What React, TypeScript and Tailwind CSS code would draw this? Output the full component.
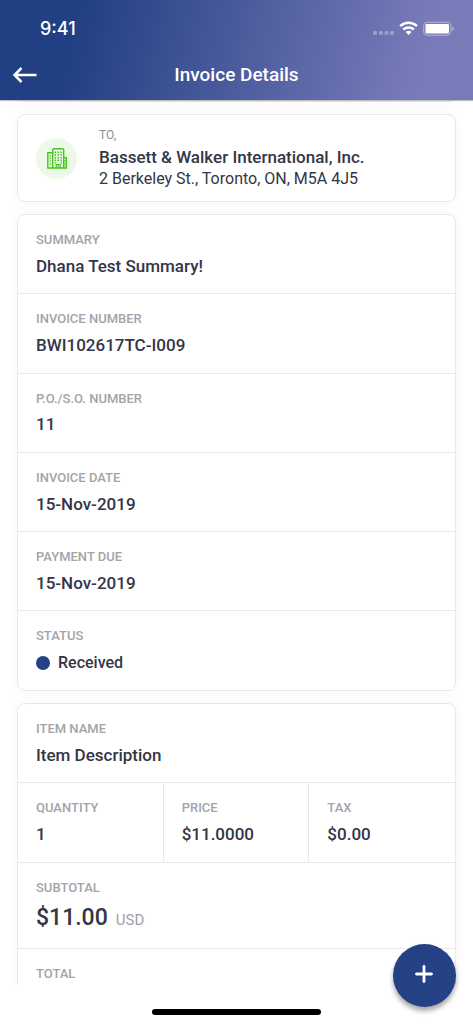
import type { ReactNode } from "react";

function Field({ label, children }: { label: string; children?: ReactNode }) {
  return (
    <div className="flex flex-col px-[18px] pt-4 pb-[15px] leading-snug">
      <dt className="text-[13px] font-medium text-[#a3a3a9]">{label}</dt>
      <dd className="pt-1.5 text-[17px] font-medium text-[#343546]">{children}</dd>
    </div>
  );
}

function Card({ children, className = "" }: { children?: ReactNode; className?: string }) {
  return (
    <section
      className={`shrink-0 rounded-lg border border-[#e9e9eb] bg-white shadow-[0_0_14px_rgba(0,0,0,0.035)] ${className}`}
    >
      {children}
    </section>
  );
}

function BuildingIcon() {
  return (
    <svg width="20" height="21" viewBox="0 0 20 21" fill="none" stroke="#43c51c" strokeWidth="1.4" aria-hidden="true">
      <path d="M5.700 20V1.700L6.700.7h9l1 1V20M5.700 4.700H.8V20h18.500V9.800h-2.600" />
      <path d="M8.300 3.500v12M11.200 3.500v10M14.100 3.500v12" strokeDasharray="1.5 1.2" strokeWidth="1.5" />
      <path d="M3.300 7v11M18 12v6" strokeDasharray="1.5 1.2" strokeWidth="1.2" />
      <path d="M9.200 20v-3.500h4V20M11.200 16.500V20" strokeWidth="1.100" />
    </svg>
  );
}

function StatusIcons() {
  return (
    <svg width="82" height="16" viewBox="0 0 82 16" fill="none" aria-hidden="true">
      <g fill="#fff" fillOpacity=".3">
        <rect x="0" y="10" width="4" height="4" rx="1.2" />
        <rect x="6" y="10" width="4" height="4" rx="1.2" />
        <rect x="11.500" y="10" width="4" height="4" rx="1.2" />
        <rect x="17" y="10" width="4" height="4" rx="1.2" />
      </g>
      <g stroke="#fff" strokeWidth="2.500">
        <path d="M27.200 5.200a12.200 12.200 0 0 1 16.800 0" />
        <path d="M30.300 8.500a7.700 7.700 0 0 1 10.600 0" />
      </g>
      <path d="M32.700 11.100a4.200 4.200 0 0 1 5.800 0l-2.900 2.900z" fill="#fff" />
      <rect x="50.700" y="1.200" width="27.200" height="13" rx="3.800" stroke="#fff" strokeOpacity=".42" strokeWidth="1.100" />
      <rect x="52.500" y="3" width="23.500" height="9.500" rx="1.200" fill="#fff" />
      <path d="M79.300 5.600c2 .8 2 3.600 0 4.400z" fill="#fff" fillOpacity=".5" />
    </svg>
  );
}

const details = [
  ["SUMMARY", "Dhana Test Summary!"],
  ["INVOICE NUMBER", "BWI102617TC-I009"],
  ["P.O./S.O. NUMBER", "11"],
  ["INVOICE DATE", "15-Nov-2019"],
  ["PAYMENT DUE", "15-Nov-2019"],
];

export default function App() {
  return (
    <div className="relative flex h-screen flex-col bg-white font-[Roboto,sans-serif] text-[#343546]">
      <header className="relative z-10 shrink-0 bg-[linear-gradient(103deg,#213f83_16%,#797bb9_88%)] text-white shadow-[0_1px_1px_rgba(0,0,0,0.25)]">
        <div className="flex h-[50px] items-end justify-between pr-[18px] pl-10">
          <time className="pb-[7px] font-[Inter,sans-serif] text-[18px] leading-7 font-medium">9:41</time>
          <div className="pb-[13px]">
            <StatusIcons />
          </div>
        </div>
        <div className="grid h-[50px] grid-cols-[48px_1fr_48px] items-center">
          <button type="button" aria-label="Back" className="flex h-12 items-center pl-3">
            <svg width="26" height="18" viewBox="0 0 26 18" fill="none" stroke="#fff" strokeWidth="2.500" aria-hidden="true">
              <path d="M24.500 9H3M9.500 2L2.500 9l7 7" />
            </svg>
          </button>
          <h1 className="text-center text-[19px] font-medium">Invoice Details</h1>
        </div>
      </header>

      <main className="flex min-h-0 flex-1 flex-col gap-3 overflow-y-auto px-[17px] [scrollbar-width:none]">
        <Card className="-mt-5 h-[22px]" />

        <Card className="flex items-center py-3 pl-[18px]">
          <div className="mr-[22px] flex size-[41px] shrink-0 items-center justify-center rounded-full bg-[#ebf9e6]">
            <BuildingIcon />
          </div>
          <div>
            <p className="text-[12px] leading-4 text-[#8f8f96]">TO,</p>
            <h2 className="pt-0.5 text-[17px] leading-6 font-medium">Bassett &amp; Walker International, Inc.</h2>
            <p className="text-[16px] leading-5">2 Berkeley St., Toronto, ON, M5A 4J5</p>
          </div>
        </Card>

        <Card>
          <dl className="divide-y divide-[#e9e9eb]">
            {details.map(([label, value]) => (
              <Field key={label} label={label}>
                {value}
              </Field>
            ))}
            <Field label="STATUS">
              <span className="flex items-center gap-2 text-[16px] leading-6">
                <span className="size-[14px] rounded-full bg-[#244185]" />
                Received
              </span>
            </Field>
          </dl>
        </Card>

        <Card>
          <dl className="divide-y divide-[#e9e9eb]">
            <Field label="ITEM NAME">Item Description</Field>
            <div className="grid grid-cols-3 divide-x divide-[#e9e9eb]">
              <Field label="QUANTITY">1</Field>
              <Field label="PRICE">$11.0000</Field>
              <Field label="TAX">$0.00</Field>
            </div>
            <Field label="SUBTOTAL">
              <span className="text-[23px] leading-[30px]">$11.00</span>
              <span className="pl-2 text-[15px] font-normal text-[#a0a0a6]">USD</span>
            </Field>
            <Field label="TOTAL" />
          </dl>
        </Card>
      </main>

      <footer className="flex h-[39px] shrink-0 items-end justify-center pb-[9px]">
        <div className="h-[6px] w-[169px] rounded-full bg-black" />
      </footer>

      <button
        type="button"
        aria-label="Add"
        className="absolute right-[17px] bottom-[17px] z-20 flex size-[63px] items-center justify-center rounded-full bg-[#244185] pr-0.5 pb-1 shadow-[0_4px_5px_rgba(0,0,0,0.35)]"
      >
        <svg width="18" height="18" viewBox="0 0 18 18" stroke="#fff" strokeWidth="2.800" strokeLinecap="round" aria-hidden="true">
          <path d="M9 1.500v15M1.500 9h15" />
        </svg>
      </button>
    </div>
  );
}
